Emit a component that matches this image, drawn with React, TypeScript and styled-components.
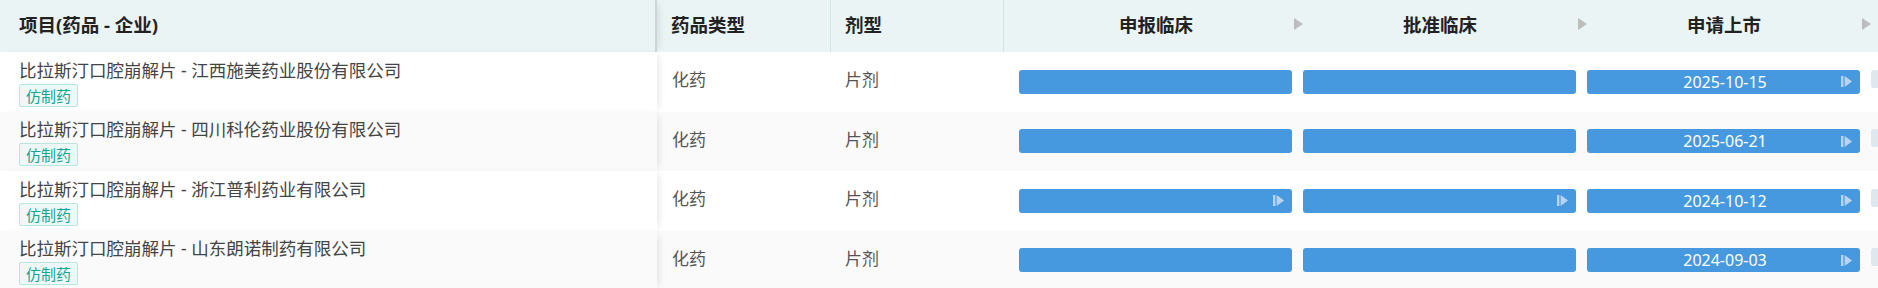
import styled, { createGlobalStyle } from "styled-components";

interface Stage {
    date?: string,
    done: boolean
}

interface Item {
    name: string,
    type: string,
    form: string,
    stages: Stage[]
}

// the 4th stage is scrolled out of view, only its arrow and bar edge show
const STAGES = ["申报临床", "批准临床", "申请上市", ""];

const items: Item[] = [
    {
        name: "比拉斯汀口腔崩解片 - 江西施美药业股份有限公司", type: "化药", form: "片剂",
        stages: [{ done: false }, { done: false }, { date: "2025-10-15", done: true }]
    },
    {
        name: "比拉斯汀口腔崩解片 - 四川科伦药业股份有限公司", type: "化药", form: "片剂",
        stages: [{ done: false }, { done: false }, { date: "2025-06-21", done: true }]
    },
    {
        name: "比拉斯汀口腔崩解片 - 浙江普利药业有限公司", type: "化药", form: "片剂",
        stages: [{ done: true }, { done: true }, { date: "2024-10-12", done: true }]
    },
    {
        name: "比拉斯汀口腔崩解片 - 山东朗诺制药有限公司", type: "化药", form: "片剂",
        stages: [{ done: false }, { done: false }, { date: "2024-09-03", done: true }]
    },
];

const GlobalStyle = createGlobalStyle`
    body {
        margin: 0;
        background: #fff;
        font-family: "Noto Sans", "Noto Sans CJK SC", sans-serif;
    }
`

export default function App() {
    return (
        <>
            <GlobalStyle />
            <Table>
                <HeaderRow>
                    <HeadName>项目(药品 - 企业)</HeadName>
                    <HeadCell>药品类型</HeadCell>
                    <HeadCell>剂型</HeadCell>
                    <StageGroup>
                        {STAGES.map((s, i) => (
                            <HeadStage key={i}>
                                <ArrowSlot>{i > 0 && <HeadArrow />}</ArrowSlot>
                                <StageLabel>{s}</StageLabel>
                            </HeadStage>
                        ))}
                    </StageGroup>
                </HeaderRow>
                {items.map((item, r) => (
                    <BodyRow key={item.name} $striped={r % 2 === 1}>
                        <NameCell>
                            <NameText>{item.name}</NameText>
                            <Tag>仿制药</Tag>
                        </NameCell>
                        <Cell>{item.type}</Cell>
                        <Cell $narrow>{item.form}</Cell>
                        <StageGroup>
                            {item.stages.map((st, i) => (
                                <StageCell key={i}>
                                    <Bar>
                                        <span />
                                        <DateText>{st.date}</DateText>
                                        {st.done ? <StepIcon /> : <span />}
                                    </Bar>
                                </StageCell>
                            ))}
                            <StageCell>
                                <PendingBar />
                            </StageCell>
                        </StageGroup>
                    </BodyRow>
                ))}
            </Table>
        </>
    )
}

const HeadArrow = () => (
    <svg width="9" height="12" viewBox="0 0 9 12">
        <polygon points="0,0 9,6 0,12" fill="#bdbdbd" />
    </svg>
)

const StepIcon = () => (
    <IconWrap width="11" height="11" viewBox="0 0 11 11">
        <rect x="0" y="0" width="2.4" height="11" fill="#b7d5f3" />
        <polygon points="3.6,0 11,5.5 3.6,11" fill="#b7d5f3" />
    </IconWrap>
)

const Table = styled.div`
    width: 1878px;
    overflow: hidden;
`

const HeaderRow = styled.div`
    display: flex;
    height: 52px;
    background: #eaf4f5;
    color: #222;
    font-size: 18.5px;
    font-weight: 700;
`

interface BodyRowProps {
    readonly $striped: boolean;
}

const BodyRow = styled.div<BodyRowProps>`
    display: flex;
    height: 59.5px;
    background: ${props => props.$striped ? "#fafafa" : "#fff"};
`

const HeadName = styled.div`
    flex: 0 0 657px;
    box-sizing: border-box;
    display: flex;
    align-items: center;
    padding: 0 0 4px 19px;
    border-right: 2px solid #c9d7d7;
    box-shadow: 5px 0 8px -4px rgba(0, 0, 0, 0.12);
    position: relative;
    z-index: 1;
`

const HeadCell = styled.div`
    flex: 0 0 174px;
    box-sizing: border-box;
    display: flex;
    align-items: center;
    padding: 0 0 4px 14px;
    border-right: 1px solid #d2e3e3;
    &:nth-child(3) {
        flex-basis: 173px;
    }
`

const StageGroup = styled.div`
    display: flex;
    padding-left: 4px;
`

const HeadStage = styled.div`
    flex: 0 0 284px;
    display: flex;
    align-items: center;
    padding-bottom: 4px;
    box-sizing: border-box;
`

const ArrowSlot = styled.div`
    flex: 0 0 11px;
    display: flex;
    justify-content: center;
    padding-left: 1px;
`

const StageLabel = styled.div`
    flex: 1;
    text-align: center;
`

const NameCell = styled.div`
    flex: 0 0 657px;
    box-sizing: border-box;
    display: flex;
    flex-direction: column;
    justify-content: center;
    align-items: flex-start;
    gap: 3px;
    padding: 2px 0 0 19px;
    background: inherit;
    box-shadow: 5px 0 8px -4px rgba(0, 0, 0, 0.12);
    position: relative;
    z-index: 1;
`

const NameText = styled.div`
    font-size: 17.5px;
    line-height: 22px;
    color: #444;
`

const Tag = styled.span`
    display: inline-flex;
    align-items: center;
    height: 23px;
    box-sizing: border-box;
    padding: 0 6px;
    border: 1px solid #b6e6de;
    border-radius: 2px;
    background: #eef9f7;
    color: #17a393;
    font-size: 15px;
`

interface CellProps {
    readonly $narrow?: boolean;
}

const Cell = styled.div<CellProps>`
    flex: 0 0 ${props => props.$narrow ? "173px" : "174px"};
    box-sizing: border-box;
    display: flex;
    align-items: center;
    padding: 0 0 6px ${props => props.$narrow ? "14px" : "15px"};
    font-size: 17px;
    color: #555;
`

const StageCell = styled.div`
    flex: 0 0 284px;
    box-sizing: border-box;
    display: flex;
    align-items: center;
    padding-left: 11px;
`

const Bar = styled.div`
    flex: 1;
    height: 24px;
    border-radius: 3px;
    background: #4699df;
    display: grid;
    grid-template-columns: 1fr auto 1fr;
    align-items: center;
    padding: 0 8px;
`

const DateText = styled.span`
    color: #fff;
    font-size: 16px;
    line-height: 24px;
    padding-left: 3px;
`

const IconWrap = styled.svg`
    justify-self: end;
    display: block;
`

const PendingBar = styled.div`
    flex: 1;
    height: 18px;
    margin-bottom: 6px;
    border-radius: 3px;
    background: #dfe7ef;
`
